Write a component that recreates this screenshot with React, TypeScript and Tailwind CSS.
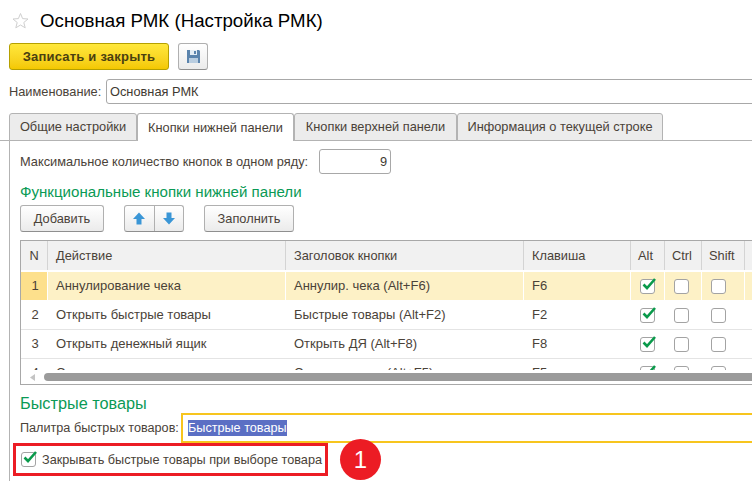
import React from "react"

const rows = [
  { n: 1, action: "Аннулирование чека", title: "Аннулир. чека (Alt+F6)", key: "F6" },
  { n: 2, action: "Открыть быстрые товары", title: "Быстрые товары (Alt+F2)", key: "F2" },
  { n: 3, action: "Открыть денежный ящик", title: "Открыть ДЯ (Alt+F8)", key: "F8" },
  { n: 4, action: "Сторно", title: "Сторно товара (Alt+F5)", key: "F5" },
]

const gridCols = "grid grid-cols-[26px_237px_237px_106px_33px_36px_42px_40px]"

function Check({ checked }: { checked?: boolean }) {
  return (
    <span className="relative block shrink-0 w-[15px] h-[15px] rounded-[3px] border border-[#a3a3a3] bg-white">
      {checked && (
        <svg className="absolute left-0 top-[-2px]" width="17" height="14" viewBox="0 0 17 14">
          <path d="M2.5 6.5 L6 10 L14 1" fill="none" stroke="#0a9a4b" strokeWidth="2.6" />
        </svg>
      )}
    </span>
  )
}

function ToolButton({ children, className }: { children: React.ReactNode; className: string }) {
  return (
    <button className={`h-[27px] flex items-center justify-center rounded-[3px] border border-[#b0b0b0] border-b-[#8f8f8f] bg-gradient-to-b from-white to-[#ebebeb] text-[#4a4238] ${className}`}>
      {children}
    </button>
  )
}

function Tab({ label, active, className }: { label: string; active?: boolean; className: string }) {
  return (
    <div
      className={`h-[28px] mb-[-1px] flex items-center justify-center rounded-t-[3px] border border-[#b3b3b3] text-[#4a4238] whitespace-nowrap ${
        active ? "bg-white border-b-0 z-10" : "bg-[#ececec]"
      } ${className}`}
    >
      {label}
    </div>
  )
}

export default function App() {
  return (
    <div className="w-[752px] h-[481px] overflow-hidden bg-white text-[12.8px] leading-[16px] text-[#4a4238] font-['Liberation_Sans',Arial,sans-serif]">
      {/* Title */}
      <div className="h-[43px] pl-[12px] flex items-center gap-[11px] pb-[2px]">
        <svg width="17" height="17" viewBox="0 0 17 17">
          <path d="M8.5 1.5 L10.6 6.6 L16 7 L11.8 10.5 L13.2 15.8 L8.5 13 L3.8 15.8 L5.2 10.5 L1 7 L6.4 6.6 Z" fill="#fff" stroke="#cfcfcf" />
        </svg>
        <h1 className="text-[18.7px] leading-[22px] text-black font-normal whitespace-nowrap">Основная РМК (Настройка РМК)</h1>
      </div>

      {/* Command bar */}
      <div className="flex pl-[9px] gap-[9px] h-[27px]">
        <button className="w-[160px] h-[27px] rounded-[3px] border border-[#b5a000] bg-gradient-to-b from-[#ffe83a] to-[#f4c800] text-[13px] font-bold tracking-[0.2px] text-[#4a3f10]">
          Записать и закрыть
        </button>
        <ToolButton className="w-[30px]">
          <svg width="15" height="15" viewBox="0 0 15 15">
            <path d="M1 1 H13 L14 2 V14 H1 Z" fill="#5b84ad" />
            <rect x="4" y="1" width="7" height="5" fill="#e4edf5" />
            <rect x="8" y="2" width="2" height="3" fill="#5b84ad" />
            <rect x="3" y="9" width="9" height="5" fill="#b9cde0" />
          </svg>
        </ToolButton>
      </div>

      {/* Name */}
      <div className="flex items-center pl-[9px] mt-[9px] h-[25px]">
        <span className="w-[97px] shrink-0">Наименование:</span>
        <div className="w-[700px] shrink-0 h-[25px] flex items-center pl-[3px] rounded-[3px] border border-[#a8a8a8] text-[#3f3a32]">
          Основная РМК
        </div>
      </div>

      {/* Tabs */}
      <div className="flex items-end pl-[9px] mt-[9px] h-[28px] border-b border-[#b3b3b3]">
        <Tab label="Общие настройки" className="w-[128px]" />
        <Tab label="Кнопки нижней панели" active className="w-[157px]" />
        <Tab label="Кнопки верхней панели" className="w-[163px]" />
        <Tab label="Информация о текущей строке" className="w-[206px]" />
      </div>

      {/* Tab page */}
      <div className="ml-[9px] pl-[10px] border-l border-[#b3b3b3] h-[340px] flex flex-col">
        <div className="flex items-center mt-[8px] h-[25px]">
          <span className="w-[299px] shrink-0 whitespace-nowrap">Максимальное количество кнопок в одном ряду:</span>
          <div className="w-[72px] h-[25px] flex items-center justify-end pr-[3px] rounded-[3px] border border-[#a8a8a8] text-[#3f3a32]">
            9
          </div>
        </div>

        <h2 className="mt-[8px] h-[23px] text-[15.1px] leading-[20px] text-[#0a9a55] font-normal whitespace-nowrap">
          Функциональные кнопки нижней панели
        </h2>

        <div className="flex">
          <ToolButton className="w-[84px]">Добавить</ToolButton>
          <div className="flex ml-[20px] w-[60px] h-[27px] rounded-[3px] border border-[#b0b0b0] border-b-[#8f8f8f] bg-gradient-to-b from-white to-[#ebebeb]">
            <div className="flex-1 flex items-center justify-center border-r border-[#b0b0b0]">
              <svg width="12" height="13" viewBox="0 0 12 13">
                <path d="M6 0.5 L12 7 H8.5 V12.5 H3.5 V7 H0 Z" fill="#3a96d6" />
              </svg>
            </div>
            <div className="flex-1 flex items-center justify-center">
              <svg width="12" height="13" viewBox="0 0 12 13">
                <path d="M6 12.5 L12 6 H8.5 V0.5 H3.5 V6 H0 Z" fill="#3a96d6" />
              </svg>
            </div>
          </div>
          <ToolButton className="w-[90px] ml-[20px]">Заполнить</ToolButton>
        </div>

        {/* Table */}
        <div className="relative mt-[8px] w-[760px] h-[145px] shrink-0 overflow-hidden border-y border-l border-[#a8a8a8] text-[13px]">
          <div className={`${gridCols} h-[31px] border-b-[2px] border-white gap-x-[1px] bg-[#d4d4d4]`}>
            {["N", "Действие", "Заголовок кнопки", "Клавиша", "Alt", "Ctrl", "Shift", ""].map((h) => (
              <div
                key={h || "empty"}
                className={`bg-[#f1f1f1] flex items-center text-[12.8px] ${h === "N" ? "justify-center" : h === "Alt" || h === "Ctrl" || h === "Shift" ? "pl-[7px]" : "pl-[8px]"}`}
              >
                {h}
              </div>
            ))}
          </div>
          {rows.map((r) => {
            const current = r.n === 1
            return (
              <div
                key={r.n}
                className={`${gridCols} h-[29px] gap-x-[1px] border-b border-[#e4e4e4] ${current ? "bg-white border-white" : ""}`}
              >
                <div className={`flex items-center justify-center pl-[2px] ${current ? "bg-[#fde08c]" : ""}`}>{r.n}</div>
                <div className={`flex items-center pl-[8px] ${current ? "bg-[#fdf1c6]" : ""}`}>{r.action}</div>
                <div className={`flex items-center pl-[8px] ${current ? "bg-[#fdf1c6]" : ""}`}>{r.title}</div>
                <div className={`flex items-center pl-[8px] ${current ? "bg-[#fdf1c6]" : ""}`}>{r.key}</div>
                <div className={`flex items-center pl-[9px] ${current ? "bg-[#fdf1c6]" : ""}`}><Check checked /></div>
                <div className={`flex items-center pl-[9px] ${current ? "bg-[#fdf1c6]" : ""}`}><Check /></div>
                <div className={`flex items-center pl-[9px] ${current ? "bg-[#fdf1c6]" : ""}`}><Check /></div>
                <div className={current ? "bg-[#fdf1c6]" : ""} />
              </div>
            )
          })}
          {/* Horizontal scrollbar */}
          <div className="absolute left-0 right-0 bottom-0 h-[14px] bg-white flex items-center">
            <svg className="ml-[9px]" width="5" height="7" viewBox="0 0 5 7">
              <path d="M0 3.5 L5 0 V7 Z" fill="#c4c4c4" />
            </svg>
            <div className="ml-[9px] h-[8px] flex-1 rounded-full bg-[#9b9b9b]" />
          </div>
        </div>

        <h2 className="mt-[8px] h-[20px] text-[16.25px] leading-[20px] text-[#0a9a55] font-normal">Быстрые товары</h2>

        <div className="flex items-center h-[30px] text-[12.65px]">
          <span className="w-[161px] shrink-0 whitespace-nowrap">Палитра быстрых товаров:</span>
          <div className="w-[600px] shrink-0 h-[30px] flex items-center pl-[5px] border-2 border-[#f7c51e]">
            <span className="bg-[#5b6fc4] text-white h-[16px] whitespace-nowrap">Быстрые товары</span>
          </div>
        </div>

        <div className="flex items-center -ml-[7px]">
          <div className="w-[315px] h-[33px] flex items-center pl-[5px] gap-[6px] border-[3px] border-[#ec1c24] text-[12.7px] text-[#4a4238] whitespace-nowrap">
            <Check checked />
            <span>Закрывать быстрые товары при выборе товара</span>
          </div>
          <div className="ml-[12px] -my-[4px] w-[41px] h-[41px] rounded-full bg-[#ec1c24] flex items-center justify-center text-white text-[24px]">
            1
          </div>
        </div>
      </div>
    </div>
  )
}
